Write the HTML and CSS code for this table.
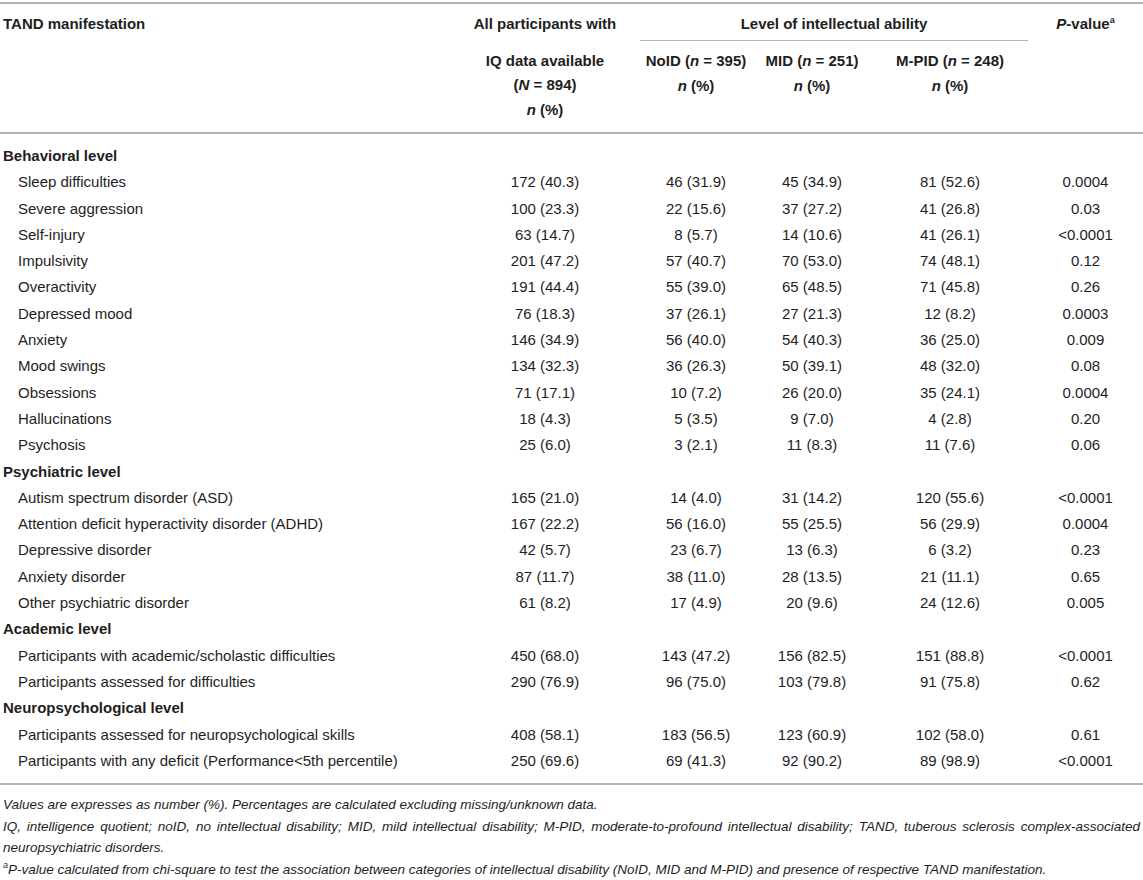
FILE: index.html
```html
<!DOCTYPE html>
<html>
<head>
<meta charset="utf-8">
<link rel="stylesheet" href="styles.css">
</head>
<body>
<div class="page">
<table class="tbl">
<colgroup>
<col class="w0"><col class="w1"><col class="w2"><col class="w3"><col class="w4"><col class="w5">
</colgroup>
<thead>
<tr class="ha">
<th class="lab">TAND manifestation</th>
<th>All participants with</th>
<th colspan="3" class="spanner">Level of intellectual ability</th>
<th><i>P</i>-value<sup>a</sup></th>
</tr>
<tr class="hb">
<th class="lab"></th>
<th>IQ data available<br>(<i>N</i> = 894)<br><i>n</i> (%)</th>
<th>NoID (<i>n</i> = 395)<br><i>n</i> (%)</th>
<th>MID (<i>n</i> = 251)<br><i>n</i> (%)</th>
<th>M-PID (<i>n</i> = 248)<br><i>n</i> (%)</th>
<th></th>
</tr>
</thead>
<tbody>
<tr class="sec first"><td class="lab">Behavioral level</td><td></td><td></td><td></td><td></td><td></td></tr>
<tr><td class="lab ind">Sleep difficulties</td><td>172 (40.3)</td><td>46 (31.9)</td><td>45 (34.9)</td><td>81 (52.6)</td><td>0.0004</td></tr>
<tr><td class="lab ind">Severe aggression</td><td>100 (23.3)</td><td>22 (15.6)</td><td>37 (27.2)</td><td>41 (26.8)</td><td>0.03</td></tr>
<tr><td class="lab ind">Self-injury</td><td>63 (14.7)</td><td>8 (5.7)</td><td>14 (10.6)</td><td>41 (26.1)</td><td>&lt;0.0001</td></tr>
<tr><td class="lab ind">Impulsivity</td><td>201 (47.2)</td><td>57 (40.7)</td><td>70 (53.0)</td><td>74 (48.1)</td><td>0.12</td></tr>
<tr><td class="lab ind">Overactivity</td><td>191 (44.4)</td><td>55 (39.0)</td><td>65 (48.5)</td><td>71 (45.8)</td><td>0.26</td></tr>
<tr><td class="lab ind">Depressed mood</td><td>76 (18.3)</td><td>37 (26.1)</td><td>27 (21.3)</td><td>12 (8.2)</td><td>0.0003</td></tr>
<tr><td class="lab ind">Anxiety</td><td>146 (34.9)</td><td>56 (40.0)</td><td>54 (40.3)</td><td>36 (25.0)</td><td>0.009</td></tr>
<tr><td class="lab ind">Mood swings</td><td>134 (32.3)</td><td>36 (26.3)</td><td>50 (39.1)</td><td>48 (32.0)</td><td>0.08</td></tr>
<tr><td class="lab ind">Obsessions</td><td>71 (17.1)</td><td>10 (7.2)</td><td>26 (20.0)</td><td>35 (24.1)</td><td>0.0004</td></tr>
<tr><td class="lab ind">Hallucinations</td><td>18 (4.3)</td><td>5 (3.5)</td><td>9 (7.0)</td><td>4 (2.8)</td><td>0.20</td></tr>
<tr><td class="lab ind">Psychosis</td><td>25 (6.0)</td><td>3 (2.1)</td><td>11 (8.3)</td><td>11 (7.6)</td><td>0.06</td></tr>
<tr class="sec"><td class="lab">Psychiatric level</td><td></td><td></td><td></td><td></td><td></td></tr>
<tr><td class="lab ind">Autism spectrum disorder (ASD)</td><td>165 (21.0)</td><td>14 (4.0)</td><td>31 (14.2)</td><td>120 (55.6)</td><td>&lt;0.0001</td></tr>
<tr><td class="lab ind">Attention deficit hyperactivity disorder (ADHD)</td><td>167 (22.2)</td><td>56 (16.0)</td><td>55 (25.5)</td><td>56 (29.9)</td><td>0.0004</td></tr>
<tr><td class="lab ind">Depressive disorder</td><td>42 (5.7)</td><td>23 (6.7)</td><td>13 (6.3)</td><td>6 (3.2)</td><td>0.23</td></tr>
<tr><td class="lab ind">Anxiety disorder</td><td>87 (11.7)</td><td>38 (11.0)</td><td>28 (13.5)</td><td>21 (11.1)</td><td>0.65</td></tr>
<tr><td class="lab ind">Other psychiatric disorder</td><td>61 (8.2)</td><td>17 (4.9)</td><td>20 (9.6)</td><td>24 (12.6)</td><td>0.005</td></tr>
<tr class="sec"><td class="lab">Academic level</td><td></td><td></td><td></td><td></td><td></td></tr>
<tr><td class="lab ind">Participants with academic/scholastic difficulties</td><td>450 (68.0)</td><td>143 (47.2)</td><td>156 (82.5)</td><td>151 (88.8)</td><td>&lt;0.0001</td></tr>
<tr><td class="lab ind">Participants assessed for difficulties</td><td>290 (76.9)</td><td>96 (75.0)</td><td>103 (79.8)</td><td>91 (75.8)</td><td>0.62</td></tr>
<tr class="sec"><td class="lab">Neuropsychological level</td><td></td><td></td><td></td><td></td><td></td></tr>
<tr><td class="lab ind">Participants assessed for neuropsychological skills</td><td>408 (58.1)</td><td>183 (56.5)</td><td>123 (60.9)</td><td>102 (58.0)</td><td>0.61</td></tr>
<tr class="last"><td class="lab ind">Participants with any deficit (Performance&lt;5th percentile)</td><td>250 (69.6)</td><td>69 (41.3)</td><td>92 (90.2)</td><td>89 (98.9)</td><td>&lt;0.0001</td></tr>
</tbody>
</table>
<div class="notes">
<p>Values are expresses as number (%). Percentages are calculated excluding missing/unknown data.</p>
<p><span class="just">IQ, intelligence quotient; noID, no intellectual disability; MID, mild intellectual disability; M-PID, moderate-to-profound intellectual disability; TAND, tuberous sclerosis complex-associated</span>neuropsychiatric disorders.</p>
<p><sup>a</sup>P-value calculated from chi-square to test the association between categories of intellectual disability (NoID, MID and M-PID) and presence of respective TAND manifestation.</p>
</div>
</div>
</body>
</html>
```
FILE: styles.css
```css
html, body {
  margin: 0;
  padding: 0;
  background: #ffffff;
}
.page {
  width: 1143px;
  padding-top: 2px;
  font-family: "Liberation Sans", Arial, sans-serif;
  color: #1e1e1e;
}
.tbl {
  width: 1143px;
  border-collapse: collapse;
  table-layout: fixed;
  font-size: 15px;
}
.w0 { width: 450px; }
.w1 { width: 190px; }
.w2 { width: 112px; }
.w3 { width: 120px; }
.w4 { width: 156px; }
.w5 { width: 115px; }
.tbl th, .tbl td {
  padding: 0;
  text-align: center;
  vertical-align: top;
  white-space: nowrap;
}
.tbl th {
  font-weight: bold;
}
.tbl thead {
  border-top: 2px solid #b5b5b5;
  border-bottom: 2px solid #b5b5b5;
}
.ha th {
  line-height: 17px;
  padding-top: 11px;
  padding-bottom: 8px;
}
.spanner {
  border-bottom: 1px solid #b5b5b5;
}
.hb th {
  line-height: 24.5px;
  padding-top: 8px;
  padding-bottom: 10px;
}
.tbl .lab {
  text-align: left;
  padding-left: 3px;
}
.tbl .ind {
  padding-left: 18px;
}
.tbl td {
  line-height: 26.3px;
}
.sec td {
  font-weight: bold;
}
.first td {
  padding-top: 9px;
}
.last td {
  padding-bottom: 9px;
}
.tbl tbody {
  border-bottom: 2px solid #b5b5b5;
}
sup {
  font-size: 9px;
  line-height: 0;
  vertical-align: 6px;
  font-weight: normal;
}
.tbl th sup {
  font-weight: bold;
}
.notes {
  padding: 9px 3px 0 3px;
  font-style: italic;
  font-size: 13.5px;
  line-height: 21.5px;
}
.notes p {
  margin: 0;
}
.notes .just {
  display: block;
  text-align: justify;
  text-align-last: justify;
  white-space: nowrap;
}
```
